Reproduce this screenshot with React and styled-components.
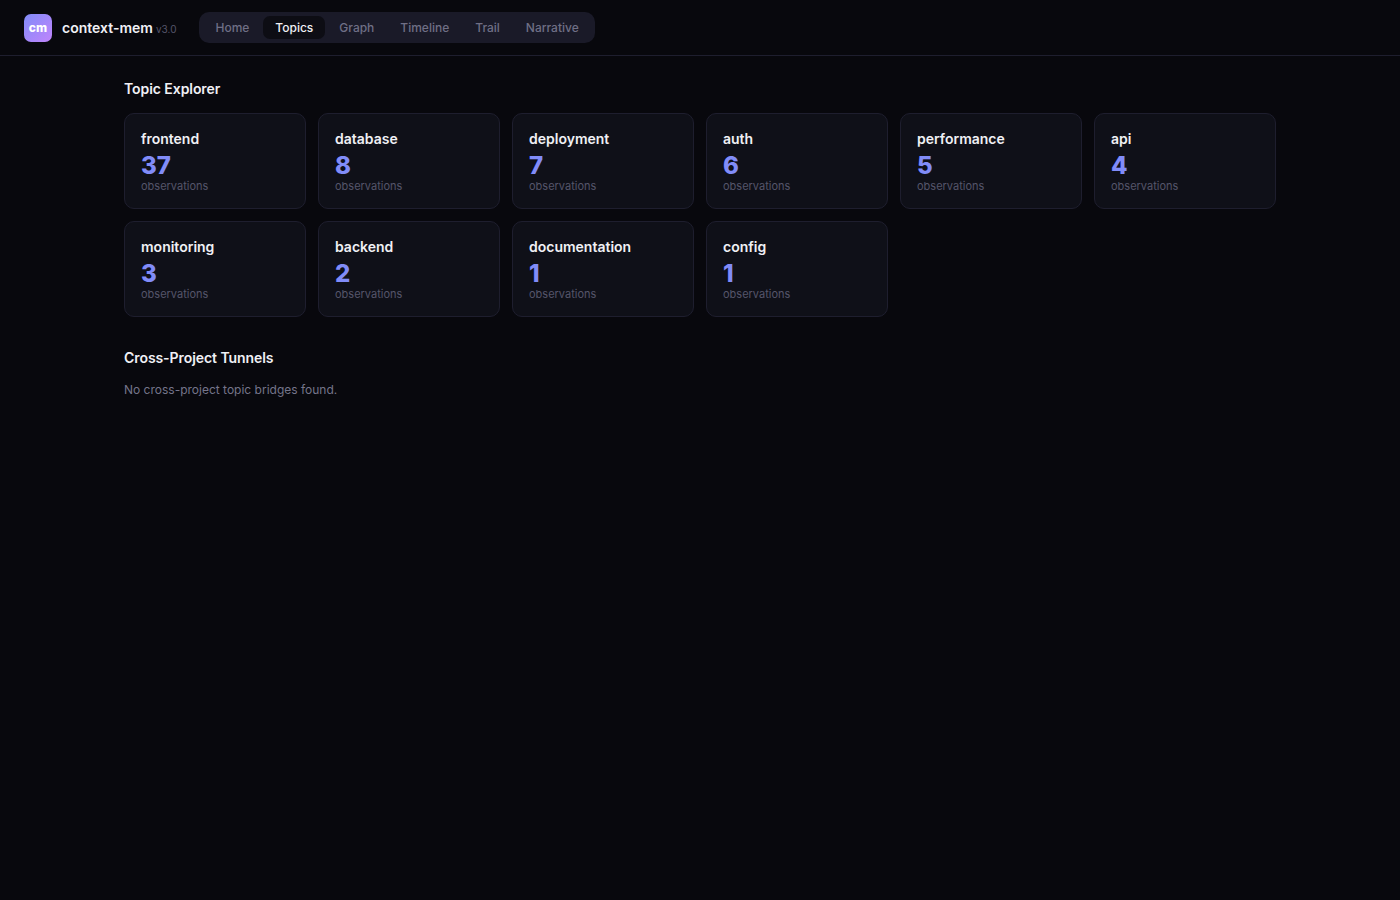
import React from 'react';
import styled, { createGlobalStyle } from 'styled-components';

const GlobalStyle = createGlobalStyle`
  * { box-sizing: border-box; }
  body {
    margin: 0;
    min-height: 100vh;
    background: #08080d;
    color: #e8e8ef;
    font-family: Inter, "Liberation Sans", sans-serif;
  }
`;

const Header = styled.header`
  display: flex;
  align-items: center;
  gap: 23px;
  height: 56px;
  padding: 0 24px;
  border-bottom: 1px solid #1e1e2e;
`;

const Brand = styled.div`
  display: flex;
  align-items: center;
`;

const Logo = styled.div`
  display: flex;
  align-items: center;
  justify-content: center;
  width: 28px;
  height: 28px;
  margin-right: 10px;
  border-radius: 7px;
  background: linear-gradient(135deg, #818cf8, #c084fc);
  color: #fff;
  font-size: 12px;
  font-weight: 800;
`;

const BrandName = styled.span`
  font-size: 14px;
  font-weight: 600;
  color: #f0f0f5;
`;

const Version = styled.span`
  margin-left: 3px;
  font-size: 10px;
  color: #55556a;
  position: relative;
  top: 1px;
`;

const Nav = styled.nav`
  display: flex;
  gap: 2px;
  padding: 4px;
  height: 31px;
  border-radius: 10px;
  background: #1a1a28;
`;

const NavItem = styled.a`
  display: flex;
  align-items: center;
  padding: 0 12px;
  border-radius: 7px;
  font-size: 12px;
  font-weight: 500;
  color: ${(p) => (p.$active ? '#f0f0f5' : '#6f6f85')};
  background: ${(p) => (p.$active ? '#0d0d14' : 'transparent')};
`;

const Main = styled.main`
  max-width: 1200px;
  margin: 0 auto;
  padding: 24px;
`;

const SectionTitle = styled.h2`
  margin: 0 0 16px;
  font-size: 14px;
  line-height: 17px;
  font-weight: 600;
  letter-spacing: -0.005em;
  color: #f0f0f5;
`;

const TopicGrid = styled.div`
  display: grid;
  grid-template-columns: repeat(6, 1fr);
  gap: 12px;
  margin-bottom: 32px;
`;

const TopicCard = styled.div`
  height: 96px;
  padding: 16px;
  border: 1px solid #1e1e2e;
  border-radius: 10px;
  background: #0f1018;
`;

const TopicName = styled.div`
  font-size: 14px;
  line-height: 17px;
  font-weight: 600;
  color: #f0f0f5;
`;

const TopicCount = styled.div`
  margin-top: 4px;
  font-size: 24px;
  line-height: 29px;
  font-weight: 800;
  color: #818cf8;
`;

const TopicLabel = styled.div`
  font-size: 11px;
  line-height: 13px;
  color: #55556a;
`;

const Empty = styled.p`
  margin: 0;
  font-size: 12px;
  line-height: 15px;
  color: #75758a;
`;

const navItems = ['Home', 'Topics', 'Graph', 'Timeline', 'Trail', 'Narrative'];

const topics = [
  { name: 'frontend', count: 37 },
  { name: 'database', count: 8 },
  { name: 'deployment', count: 7 },
  { name: 'auth', count: 6 },
  { name: 'performance', count: 5 },
  { name: 'api', count: 4 },
  { name: 'monitoring', count: 3 },
  { name: 'backend', count: 2 },
  { name: 'documentation', count: 1 },
  { name: 'config', count: 1 },
];

const App = () => {
  return (
    <>
      <GlobalStyle />
      <Header>
        <Brand>
          <Logo>cm</Logo>
          <BrandName>context-mem</BrandName>
          <Version>v3.0</Version>
        </Brand>
        <Nav>
          {navItems.map((item) => (
            <NavItem key={item} $active={item === 'Topics'}>{item}</NavItem>
          ))}
        </Nav>
      </Header>
      <Main>
        <SectionTitle>Topic Explorer</SectionTitle>
        <TopicGrid>
          {topics.map((topic) => (
            <TopicCard key={topic.name}>
              <TopicName>{topic.name}</TopicName>
              <TopicCount>{topic.count}</TopicCount>
              <TopicLabel>observations</TopicLabel>
            </TopicCard>
          ))}
        </TopicGrid>
        <SectionTitle>Cross-Project Tunnels</SectionTitle>
        <Empty>No cross-project topic bridges found.</Empty>
      </Main>
    </>
  );
};

export default App;
